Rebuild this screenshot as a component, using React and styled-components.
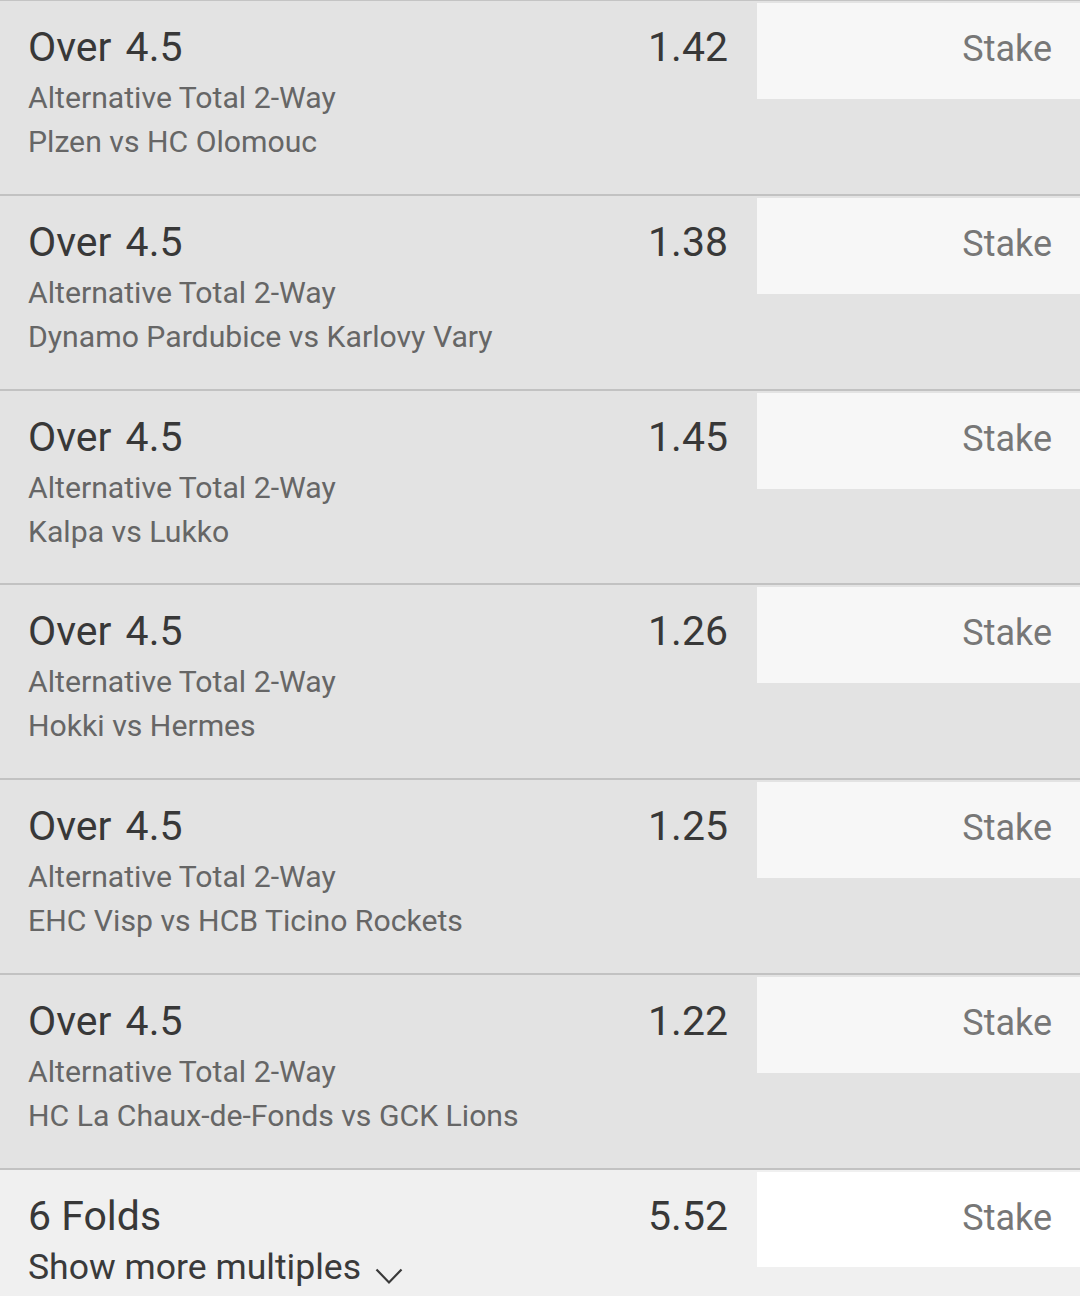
import React from 'react'
import styled, { createGlobalStyle } from 'styled-components'

const GlobalStyle = createGlobalStyle`
  html, body {
    margin: 0;
    padding: 0;
    background: #f0f0f0;
    font-family: Roboto, "Liberation Sans", Arial, sans-serif;
  }
`

const Slip = styled.div`
  border-top: 1px solid #c4c4c4;
`

const Row = styled.div`
  display: grid;
  grid-template-columns: 1fr auto 323px;
  height: ${props => props.$fold ? 'auto' : '192.8px'};
  min-height: ${props => props.$fold ? '126px' : '0'};
  background: ${props => props.$fold ? '#f0f0f0' : '#e3e3e3'};
  border-bottom: ${props => props.$fold ? 'none' : '2px solid #c2c2c2'};
  box-sizing: content-box;
`

const Info = styled.div`
  padding-left: 28px;
  padding-top: ${props => props.$fold ? '22px' : '22px'};
`

const Title = styled.div`
  font-size: 41px;
  line-height: 48px;
  color: #383838;
  word-spacing: ${props => props.$wide ? '4px' : '0'};
`

const Sub = styled.div`
  font-size: 30.2px;
  line-height: 44px;
  color: #666;
  &:nth-child(2) {
    margin-top: 5px;
  }
`

const More = styled.div`
  margin-top: 5px;
  font-size: 35.6px;
  line-height: 44px;
  color: #3a3a3a;
  display: flex;
  align-items: baseline;
  gap: 14px;
`

const Chevron = styled.svg`
  width: 28px;
  height: 17px;
  position: relative;
  top: 6px;
`

const Odds = styled.div`
  font-size: 41px;
  line-height: 48px;
  color: #383838;
  padding-right: 29px;
  padding-top: 22px;
`

const StakeBox = styled.div`
  align-self: start;
  margin-top: 2px;
  height: ${props => props.$fold ? '95px' : '96px'};
  box-sizing: border-box;
  padding: 25px 28px 0 0;
  background: ${props => props.$fold ? '#ffffff' : '#f7f7f7'};
  text-align: right;
  font-size: 36px;
  line-height: 42px;
  color: #777;
`

const bets = [
  { odds: '1.42', match: 'Plzen vs HC Olomouc' },
  { odds: '1.38', match: 'Dynamo Pardubice vs Karlovy Vary' },
  { odds: '1.45', match: 'Kalpa vs Lukko' },
  { odds: '1.26', match: 'Hokki vs Hermes' },
  { odds: '1.25', match: 'EHC Visp vs HCB Ticino Rockets' },
  { odds: '1.22', match: 'HC La Chaux-de-Fonds vs GCK Lions' },
]

const App = () => {
  return (
    <>
      <GlobalStyle />
      <Slip>
        {bets.map(bet => (
          <Row key={bet.match}>
            <Info>
              <Title $wide>Over 4.5</Title>
              <Sub>Alternative Total 2-Way</Sub>
              <Sub>{bet.match}</Sub>
            </Info>
            <Odds>{bet.odds}</Odds>
            <StakeBox>Stake</StakeBox>
          </Row>
        ))}
        <Row $fold>
          <Info $fold>
            <Title>6 Folds</Title>
            <More>
              Show more multiples
              <Chevron viewBox="0 0 28 17" fill="none">
                <path d="M1.5 1.5 L14 14.5 L26.5 1.5" stroke="#3a3a3a" strokeWidth="2.2" />
              </Chevron>
            </More>
          </Info>
          <Odds $fold>5.52</Odds>
          <StakeBox $fold>Stake</StakeBox>
        </Row>
      </Slip>
    </>
  )
}

export default App
